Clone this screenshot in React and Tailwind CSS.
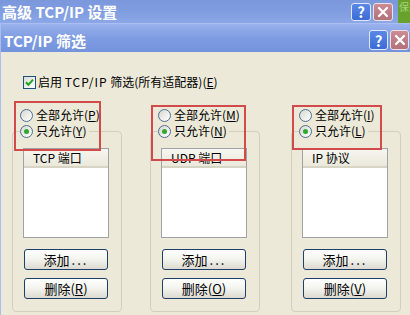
function Radio({ checked }) {
  return (
    <span className="flex items-center justify-center w-[13px] h-[13px] rounded-full border border-[#4f6d96] bg-linear-to-br from-[#d8d8d0] to-white shrink-0">
      {checked && <span className="w-[5px] h-[5px] rounded-full bg-[#2fa82f]" />}
    </span>
  );
}

function Label({ text, k }) {
  return (
    <span className="whitespace-nowrap leading-4">
      {text}(<u>{k}</u>)
    </span>
  );
}

function XpButton({ children, extra }) {
  return (
    <div className={"flex items-center justify-center w-[84px] h-[21px] ml-[11px] rounded-[3px] border border-[#1f3f6b] bg-linear-to-b from-white via-[#f3f3ee] to-[#dcdad0] text-[13px] text-black leading-none " + extra}>
      {children}
    </div>
  );
}

export default function App() {
  const cols = [
    { a: "P", b: "Y", head: "TCP 端口", del: "R", ml: "ml-0" },
    { a: "M", b: "N", head: "UDP 端口", del: "O", ml: "ml-[28px]" },
    { a: "I", b: "L", head: "IP 协议", del: "V", ml: "ml-[31px]" },
  ];
  return (
    <div className="relative w-[410px] h-[315px] overflow-hidden bg-[#ece9d8] font-['Noto_Sans_CJK_SC',sans-serif] text-[12px] text-black">
      {/* outer title bar */}
      <div className="flex items-center h-[23px] bg-linear-to-b from-[#7b98dd] via-[#809de1] to-[#8ba7e7]">
        <div className="flex-1 pl-[2px] text-white text-[15px] font-bold leading-none whitespace-nowrap">
          高级 TCP/IP 设置
        </div>
        <div className="flex items-center justify-center w-[20px] h-[18px] rounded-[3px] border border-[#dfe8fb] bg-linear-to-b from-[#5a88e6] to-[#3d6bd6] text-white text-[15px] font-bold leading-none">
          ?
        </div>
        <div className="flex items-center justify-center w-[20px] h-[18px] ml-[2px] rounded-[3px] border border-[#efe0e6] bg-linear-to-b from-[#cc8c94] to-[#b2707a]">
          <svg width="12" height="12" viewBox="0 0 12 12">
            <path d="M2 2 L10 10 M10 2 L2 10" stroke="white" strokeWidth="2.2" strokeLinecap="round" />
          </svg>
        </div>
        <div className="flex items-start justify-center w-[12px] h-[23px] ml-[5px] pt-[2px] bg-[#68a22c] text-[#a6d27a] text-[10px] leading-none">
          保
        </div>
      </div>

      {/* inner window */}
      <div className="flex flex-col h-[292px] border-l border-t border-[#a9bdf0]">
        <div className="flex items-center h-[28px] pt-[4px] pr-[1px] bg-linear-to-b from-[#9ab2ed] via-[#7e9ce2] to-[#7393dc]">
          <div className="flex-1 pl-[3px] text-white text-[15px] font-bold leading-none whitespace-nowrap">
            TCP/IP 筛选
          </div>
          <div className="flex items-center justify-center w-[19px] h-[20px] rounded-[3px] border border-[#dfe8fb] bg-linear-to-b from-[#5a88e6] to-[#3d6bd6] text-white text-[15px] font-bold leading-none">
            ?
          </div>
          <div className="flex items-center justify-center w-[19px] h-[20px] ml-[2px] rounded-[3px] border border-[#efe0e6] bg-linear-to-b from-[#cc8c94] to-[#b2707a]">
            <svg width="12" height="12" viewBox="0 0 12 12">
              <path d="M2 2 L10 10 M10 2 L2 10" stroke="white" strokeWidth="2.2" strokeLinecap="round" />
            </svg>
          </div>
        </div>

        {/* body */}
        <div className="flex flex-col pl-[11px] pt-[22px]">
          <div className="flex items-center h-4 ml-[11px] gap-[2px]">
            <span className="flex items-center justify-center w-[13px] h-[13px] border border-[#1c5180] bg-linear-to-br from-[#dcdcd4] to-white">
              <svg width="9" height="9" viewBox="0 0 9 9">
                <path d="M1 4.2 L3.4 6.8 L8 1.6" fill="none" stroke="#21a121" strokeWidth="2" />
              </svg>
            </span>
            <span className="whitespace-nowrap leading-4">
              启用 <span className="tracking-[1px]">TCP/IP</span> 筛选(所有适配器)(<u>E</u>)
            </span>
          </div>

          <div className="flex mt-[17px]">
            {cols.map((c) => (
              <div key={c.a} className={"flex flex-col w-[110px] " + c.ml}>
                <div className="flex items-center h-4 pl-[8px] gap-[3px]">
                  <Radio />
                  <Label text="全部允许" k={c.a} />
                </div>
                <div className="flex flex-col mt-[8px] h-[181px] border border-[#d0d0bf] rounded-[4px]">
                  <div className="flex items-center self-start h-4 -mt-[9px] ml-[7px] pr-[2px] gap-[3px] bg-[#ece9d8]">
                    <Radio checked />
                    <Label text="只允许" k={c.b} />
                  </div>
                  <div className="flex flex-col w-[86px] h-[90px] mt-[9px] ml-[10px] border border-[#9fa3a8] bg-white">
                    <div className="flex items-center h-[19px] pl-[9px] border-b-2 border-[#d8d4c4] bg-linear-to-b from-[#f7f6f0] to-[#ebe9dc] whitespace-nowrap leading-none">
                      {c.head}
                    </div>
                  </div>
                  <XpButton extra="mt-[11px]">
                    添加<span className="tracking-[2px] pl-[2px]">...</span>
                  </XpButton>
                  <XpButton extra="mt-[8px]">
                    删除(<u>{c.del}</u>)
                  </XpButton>
                </div>
              </div>
            ))}
          </div>
        </div>
      </div>

      {/* red annotation boxes */}
      <div className="absolute left-[14px] top-[101px] w-[87px] h-[50px] border-2 border-[#d24a4a]" />
      <div className="absolute left-[151px] top-[105px] w-[95px] h-[56px] border-2 border-[#d24a4a]" />
      <div className="absolute left-[292px] top-[105px] w-[90px] h-[45px] border-2 border-[#d24a4a]" />
    </div>
  );
}
